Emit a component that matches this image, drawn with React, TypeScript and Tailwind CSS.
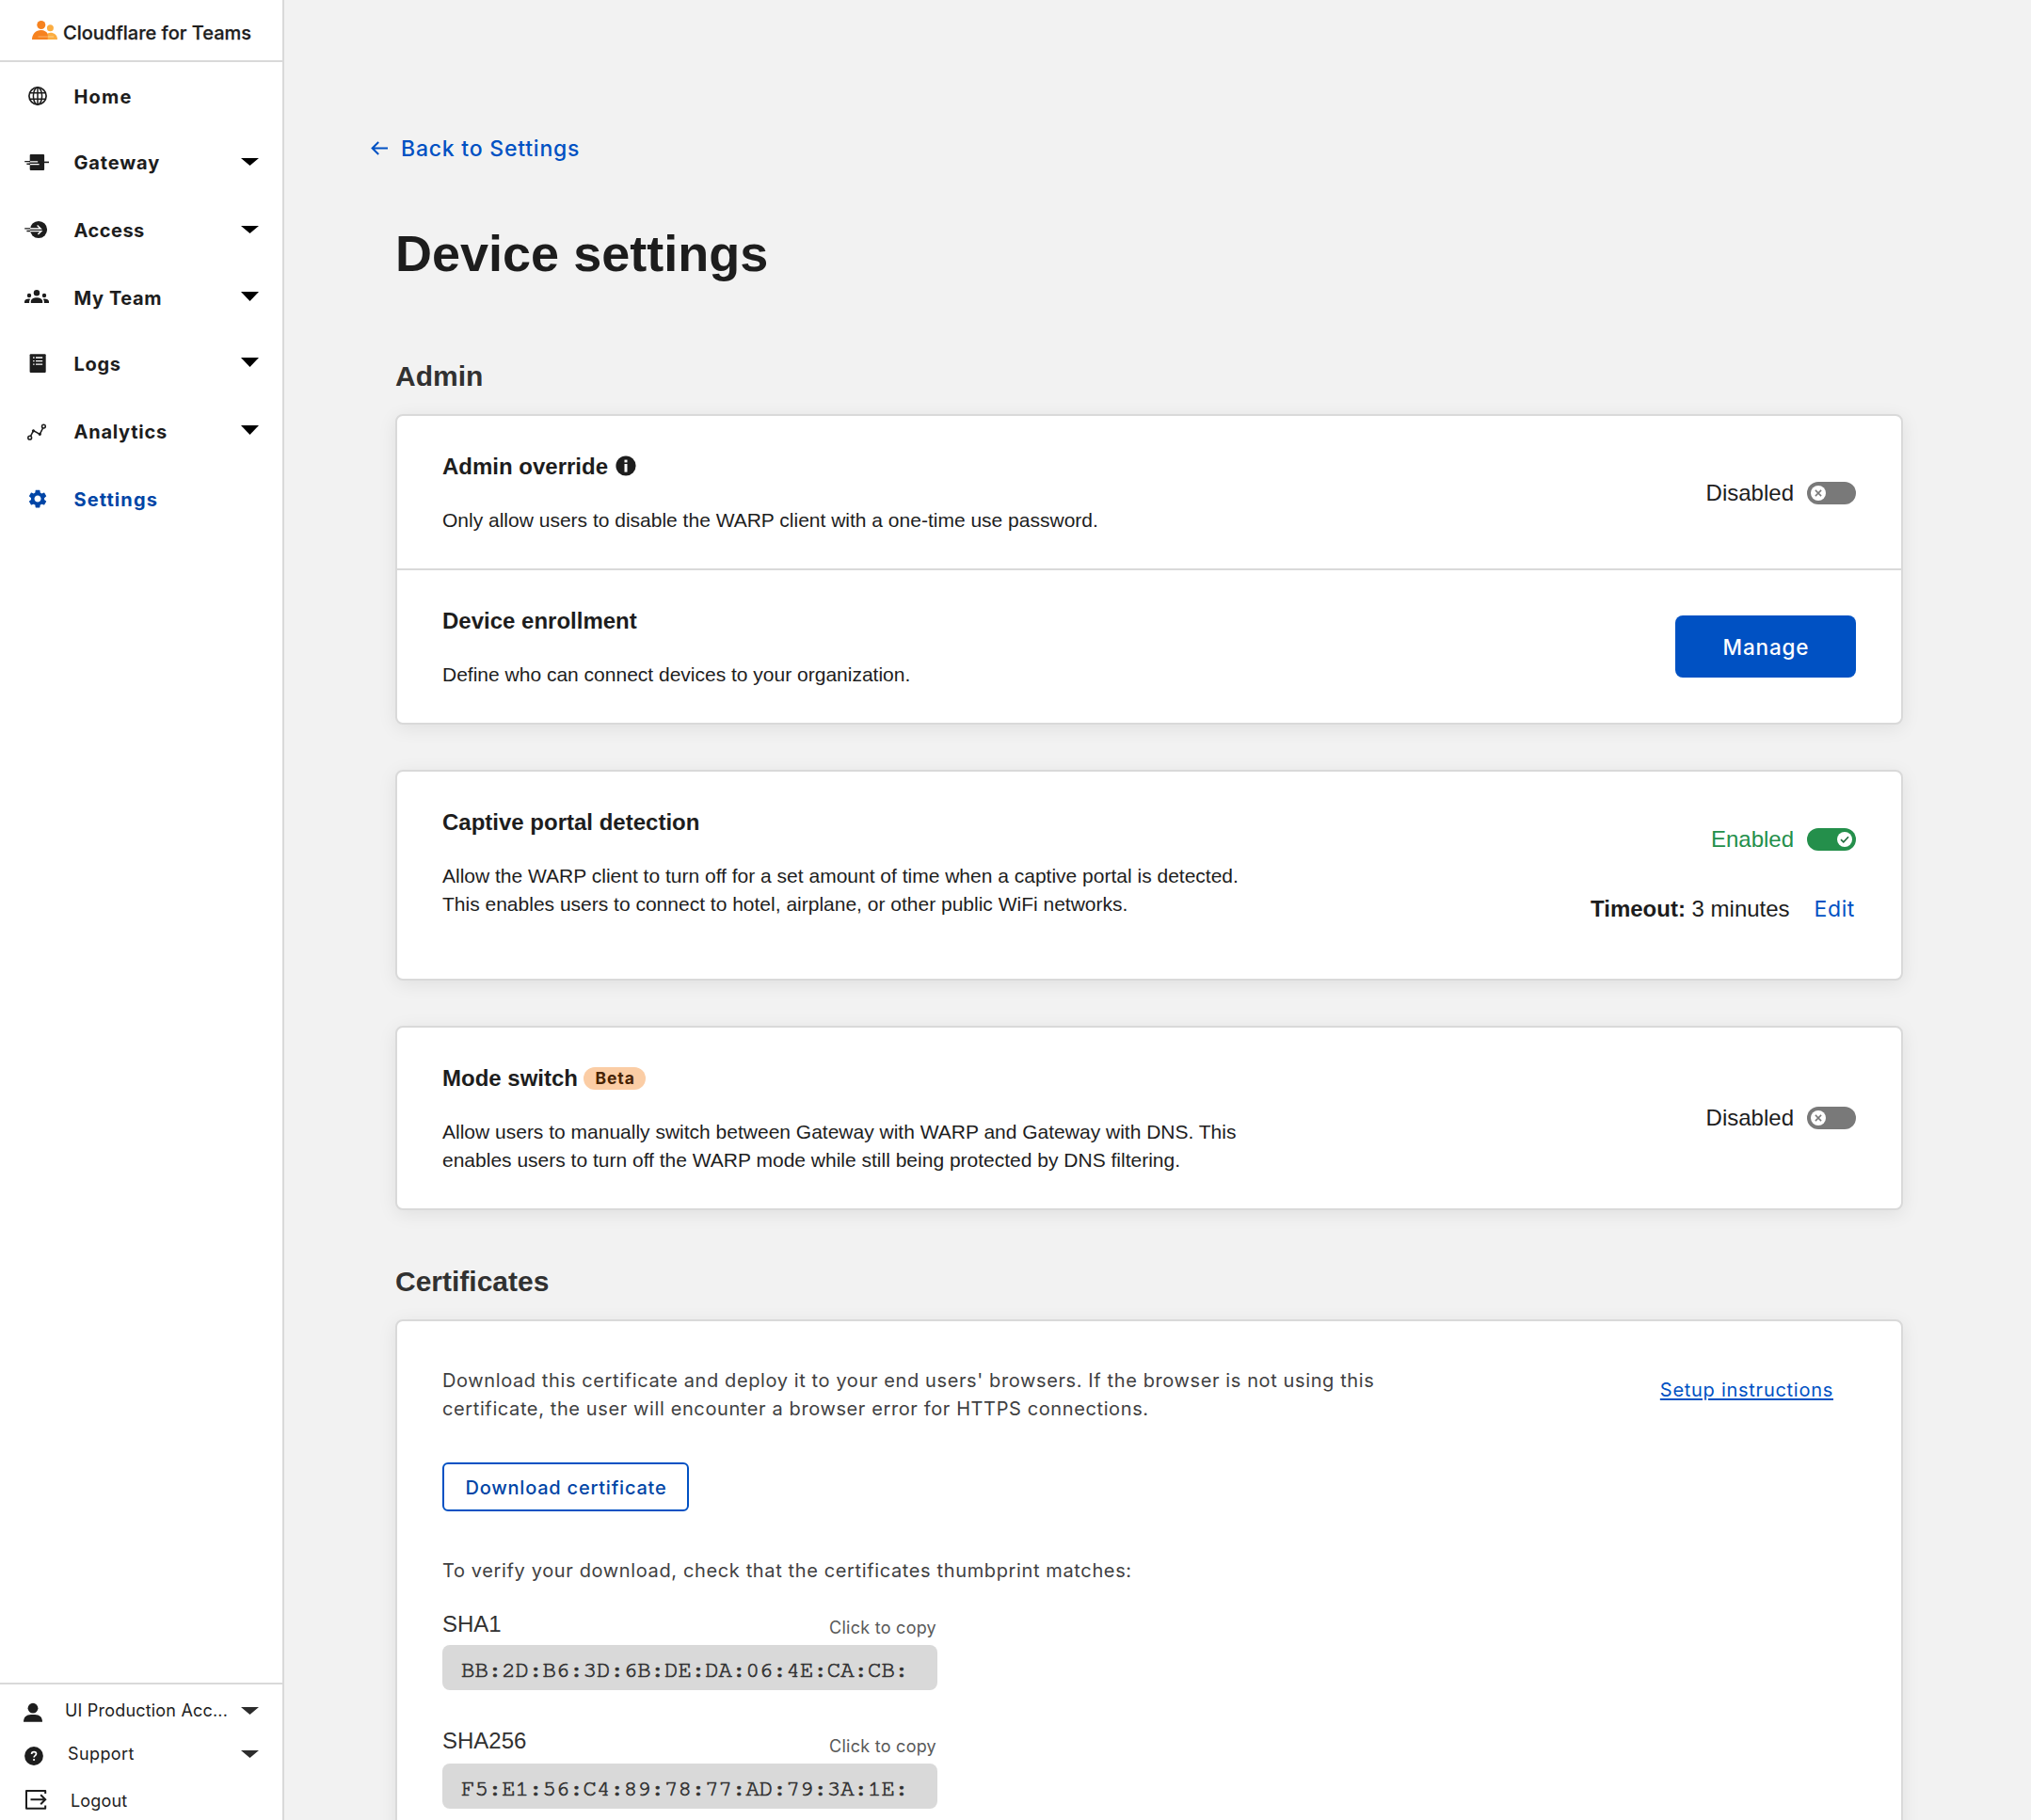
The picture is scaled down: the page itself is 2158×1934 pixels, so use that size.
import type { ReactNode } from "react";
import { MdSettings } from "react-icons/md";

const INTER = "font-['Inter',sans-serif]";
const HELV = "font-['Liberation_Sans',Arial,sans-serif]";

function Icon({ children }: { children: ReactNode }) {
  return (
    <svg className="ml-[25px] h-7 w-7 shrink-0 overflow-visible" viewBox="0 0 28 28" fill="none">
      {children}
    </svg>
  );
}

function Caret({ className }: { className: string }) {
  return (
    <svg className={className} viewBox="0 0 19 10" preserveAspectRatio="none">
      <path d="M0 0H19L9.5 10Z" fill="currentColor" />
    </svg>
  );
}

const SHORT_CARET = "mb-0.5 ml-auto h-2 w-[19px] text-black";
const TALL_CARET = "mb-1 ml-auto h-2.5 w-[19px] text-black";

const INK = "#1d1d1d";

const icons = {
  home: (
    <g stroke={INK} strokeWidth="1.5">
      <circle cx="15" cy="13" r="9.1" strokeWidth="1.7" />
      <ellipse cx="15" cy="13" rx="4.6" ry="9.1" />
      <path d="M15 4V22M6.6 9.8H23.4M6.6 16.2H23.4" />
    </g>
  ),
  gateway: (
    <g>
      <rect x="6.7" y="5" width="15.4" height="17" rx="1" fill={INK} />
      <path d="M22 13.4H27" stroke={INK} strokeWidth="1.6" />
      <path d="M1.2 12.6H7M3.4 15.3H7" stroke={INK} strokeWidth="1.4" />
      <path d="M7 12.8H15.2M7 15.6H16.6" stroke="#fff" strokeWidth="1.3" />
    </g>
  ),
  access: (
    <g>
      <circle cx="16" cy="13" r="9.1" fill={INK} />
      <path d="M1.2 11.8H8M3.4 14.5H8" stroke={INK} strokeWidth="1.3" />
      <path d="M7 12H18.2L14.6 8.6M7 14.6H18.8L15.4 18" stroke="#fff" strokeWidth="1.4" />
    </g>
  ),
  team: (
    <g fill={INK}>
      <circle cx="14" cy="8.2" r="3.2" />
      <circle cx="6" cy="11" r="2.2" />
      <circle cx="22" cy="11" r="2.2" />
      <path d="M7.8 19V17.4C7.8 14.6 11 13.2 14 13.2S20.2 14.6 20.2 17.4V19Z" />
      <path d="M1 19V17.6C1 15.6 3.2 14.5 5.6 14.5L7.3 14.8C6.5 15.6 6.1 16.5 6.1 17.6V19Z" />
      <path d="M27 19V17.6C27 15.6 24.8 14.5 22.4 14.5L20.7 14.8C21.5 15.6 21.9 16.5 21.9 17.6V19Z" />
    </g>
  ),
  logs: (
    <g>
      <rect x="6.6" y="3.2" width="17.1" height="19.8" rx="1" fill={INK} />
      <path d="M10.1 7H11.6M10.1 10.6H11.6M10.1 14.2H11.6M13 7H20.2M13 10.6H20.2M13 14.2H20.2" stroke="#fff" strokeWidth="1.3" />
    </g>
  ),
  analytics: (
    <g stroke={INK} strokeWidth="1.5">
      <circle cx="6.7" cy="20.2" r="1.9" />
      <circle cx="21.4" cy="8.1" r="1.9" />
      <path d="M7.6 18.4L10.5 12.6L17.3 16.4L20.6 9.9" />
      <circle cx="10.5" cy="12.8" r="0.9" fill={INK} />
      <circle cx="17.3" cy="16.3" r="0.9" fill={INK} />
    </g>
  ),
  settings: <MdSettings x="3.3" y="1.3" size={23.5} color="#0045a6" />,
};

const nav: { label: string; icon: keyof typeof icons; row: string; text: string; caret?: string }[] = [
  { label: "Home", icon: "home", row: "", text: "tracking-[1.15px]" },
  { label: "Gateway", icon: "gateway", row: "", text: "tracking-[0.85px]", caret: SHORT_CARET },
  { label: "Access", icon: "access", row: "mt-0.5", text: "tracking-[0.5px]", caret: SHORT_CARET },
  { label: "My Team", icon: "team", row: "mt-0.5", text: "tracking-[0.6px]", caret: TALL_CARET },
  { label: "Logs", icon: "logs", row: "", text: "tracking-[0.7px]", caret: TALL_CARET },
  { label: "Analytics", icon: "analytics", row: "mt-0.5", text: "tracking-[0.75px]", caret: TALL_CARET },
  { label: "Settings", icon: "settings", row: "mt-0.5", text: "tracking-[1.1px] text-[#0045a6]" },
];

function Sidebar() {
  return (
    <aside className={`flex w-[302px] shrink-0 flex-col border-r-2 border-[#d9d9d9] bg-white text-[#1d1d1d] ${INTER}`}>
      <div className="flex h-[66px] items-center border-b-2 border-[#d9d9d9] pt-1 pl-[34px]">
        <svg className="mb-1 h-5 w-[27px]" viewBox="0 0 27 20">
          <circle cx="9.8" cy="4.5" r="4.5" fill="#f6821f" />
          <path d="M0 20C0 14 4.2 10 9.6 10C13 10 15.6 11.6 17 14.4V20Z" fill="#f6821f" />
          <circle cx="19.4" cy="7.8" r="3.5" fill="#fbad41" />
          <path d="M16.7 20V13.4C20.6 11.6 27 13.4 27 20Z" fill="#fbad41" />
          <path d="M6.5 17H16.4" stroke="#fbb26a" strokeWidth="1" />
          <path d="M16.7 17H23" stroke="#fdd08d" strokeWidth="1" />
        </svg>
        <span className="mt-px ml-1.5 text-[20px] leading-7 font-medium [-webkit-text-stroke:0.25px_#1d1d1d]">Cloudflare for Teams</span>
      </div>
      <nav className="pt-0.5">
        {nav.map((n) => (
          <a key={n.label} className={`flex h-[70px] items-center pr-[25px] ${n.row}`}>
            <Icon>{icons[n.icon]}</Icon>
            <span className={`ml-[25.5px] text-[20px] leading-7 font-bold ${n.text}`}>{n.label}</span>
            {n.caret && <Caret className={n.caret} />}
          </a>
        ))}
      </nav>
      <div className="mt-auto h-[146px] border-t-2 border-[#d9d9d9] pt-1 text-[18px] leading-6">
        <div className="flex h-[46px] items-center pr-[25px]">
          <Icon>
            <circle cx="10" cy="12.2" r="5.4" fill={INK} />
            <path d="M0 26.7C0 21.8 3 19 8 19H12C17 19 20 21.8 20 26.7Z" fill={INK} />
          </Icon>
          <span className="mt-0.5 ml-4 tracking-[0.19px]">UI Production Acc...</span>
          <Caret className="mt-0.5 ml-auto h-2 w-[19px] text-[#2c2c2c]" />
        </div>
        <div className="flex h-[46px] items-center pr-[25px]">
          <Icon>
            <circle cx="11" cy="17" r="9.9" fill={INK} />
            <path d="M8.6 14.9C8.6 13.5 9.6 12.7 11.1 12.7S13.5 13.5 13.5 14.8C13.5 16.6 11.1 16.6 11.1 18.4" stroke="#fff" strokeWidth="1.7" />
            <circle cx="11.1" cy="21" r="1.1" fill="#fff" />
          </Icon>
          <span className="mt-0.5 ml-[19px] tracking-[0.4px]">Support</span>
          <Caret className="mt-0.5 ml-auto h-2 w-[19px] text-[#2c2c2c]" />
        </div>
        <div className="mt-1 flex h-[46px] items-center pr-[25px]">
          <Icon>
            <path d="M23.2 7V3.9H3V22.7H23.2V19.6" stroke={INK} strokeWidth="2" strokeLinejoin="round" />
            <path d="M7.5 13.2H23M18.2 8.2L23.2 13.2L18.2 18.2" stroke={INK} strokeWidth="2" />
          </Icon>
          <span className="mt-0.5 ml-[22px] tracking-[0.15px]">Logout</span>
        </div>
      </div>
    </aside>
  );
}

function Card({ className = "", children }: { className?: string; children: ReactNode }) {
  return (
    <section className={`rounded-lg border-2 border-[#d9d9d9] bg-white shadow-[0_4px_20px_rgba(0,0,0,0.08)] ${className}`}>
      {children}
    </section>
  );
}

function Setting({ title, badge, text, children }: { title: string; badge?: ReactNode; text: string; children: ReactNode }) {
  return (
    <div className="flex justify-between px-12 text-[#1d1d1d]">
      <div className="pt-[38px] pb-9">
        <h3 className="flex h-8 items-center text-[24px] leading-8 font-bold">
          {title}
          {badge}
        </h3>
        <p className="mt-[26px] max-w-[860px] text-[21px] leading-[30px]">{text}</p>
      </div>
      {children}
    </div>
  );
}

function Toggle({ on = false }: { on?: boolean }) {
  return (
    <div className={`flex items-center ${on ? "text-[#248f4b]" : ""}`}>
      <span className="text-[24px] leading-8">{on ? "Enabled" : "Disabled"}</span>
      <span className={`ml-3.5 flex h-6 w-[52px] rounded-full p-1 ${on ? "justify-end bg-[#248f4b]" : "bg-[#797979]"}`}>
        <svg className="h-4 w-4" viewBox="0 0 16 16" fill="none">
          <circle cx="8" cy="8" r="8" fill="#fff" />
          {on ? (
            <path d="M4 8.2L6.8 10.8L12 5.2" stroke="#1f6b3c" strokeWidth="1.6" />
          ) : (
            <path d="M4.9 4.9L11.1 11.1M11.1 4.9L4.9 11.1" stroke="#797979" strokeWidth="1.5" />
          )}
        </svg>
      </span>
    </div>
  );
}

function Thumbprint({ label, value, row }: { label: string; value: string; row: string }) {
  return (
    <div className="w-[526px]">
      <div className={`flex items-start justify-between ${row}`}>
        <span className={`text-[24px] leading-8 text-[#313131] ${HELV}`}>{label}</span>
        <span className="self-end pr-px text-[18px] leading-[37px] tracking-[0.26px] text-[#595959]">Click to copy</span>
      </div>
      <div className="flex h-12 items-center rounded-lg bg-[#d9d9d9] pt-1.5 pl-5 font-['FreeMono','Liberation_Mono',monospace] text-[24px] leading-6 text-[#313131] [-webkit-text-stroke:0.7px_#313131]">
        {value}
      </div>
    </div>
  );
}

export default function App() {
  return (
    <div className="flex h-[1934px] w-[2158px] overflow-hidden bg-[#f2f2f2]">
      <Sidebar />
      <main className={`flex-1 pt-[142px] pr-[136px] ${HELV}`}>
        <a className={`flex h-8 items-center pl-[92px] text-[23px] leading-8 font-medium tracking-[0.78px] text-[#0051c3] ${INTER}`}>
          <svg className="h-4 w-[18px]" viewBox="0 0 18 16" fill="none" stroke="#0051c3" strokeWidth="2">
            <path d="M18 7.5H2M8.2 1L1.6 7.5L8.2 14" />
          </svg>
          <span className="ml-3.5">Back to Settings</span>
        </a>
        <div className="pl-[118px]">
          <h1 className="mt-[63px] text-[54px] leading-[64px] font-bold text-[#1d1d1d]">Device settings</h1>

          <h2 className="mt-[81px] text-[30px] leading-9 font-bold text-[#313131]">Admin</h2>
          <Card className="mt-[22px]">
            <Setting
              title="Admin override"
              text="Only allow users to disable the WARP client with a one-time use password."
              badge={
                <svg className="mb-0.5 ml-[7.5px] h-[22px] w-[22px]" viewBox="0 0 22 22">
                  <circle cx="11" cy="11" r="10.6" fill={INK} />
                  <rect x="9.5" y="9" width="3" height="8.6" fill="#fff" />
                  <rect x="9.5" y="4.6" width="3" height="2.8" fill="#fff" />
                </svg>
              }
            >
              <div className="flex items-center pt-0.5">
                <Toggle />
              </div>
            </Setting>
            <div className="border-t-2 border-[#d9d9d9]">
              <Setting title="Device enrollment" text="Define who can connect devices to your organization.">
                <div className="flex items-center">
                  <button className={`h-[66px] w-48 rounded-lg bg-[#0051c3] pt-px pl-px text-[22.5px] font-medium tracking-[0.85px] text-white ${INTER}`}>
                    Manage
                  </button>
                </div>
              </Setting>
            </div>
          </Card>

          <Card className="mt-12 h-[224px]">
            <Setting
              title="Captive portal detection"
              text="Allow the WARP client to turn off for a set amount of time when a captive portal is detected. This enables users to connect to hotel, airplane, or other public WiFi networks."
            >
              <div className="flex flex-col items-end pt-14">
                <Toggle on />
                <div className="mt-[42px] flex text-[24px] leading-8">
                  <span>
                    <b>Timeout:</b> 3 minutes
                  </span>
                  <a className={`mr-px ml-[26px] text-[23px] tracking-[0.6px] text-[#0051c3] ${INTER}`}>Edit</a>
                </div>
              </div>
            </Setting>
          </Card>

          <Card className="mt-12">
            <Setting
              title="Mode switch"
              text="Allow users to manually switch between Gateway with WARP and Gateway with DNS. This enables users to turn off the WARP mode while still being protected by DNS filtering."
              badge={
                <span className={`ml-1.5 h-6 w-[66px] rounded-full bg-[#fbcda5] pl-[12.5px] text-[17.5px] leading-6 font-bold tracking-[0.9px] text-[#482303] ${INTER}`}>
                  Beta
                </span>
              }
            >
              <div className="flex items-center">
                <Toggle />
              </div>
            </Setting>
          </Card>

          <h2 className="mt-[58px] text-[30px] leading-9 font-bold text-[#313131]">Certificates</h2>
          <Card className={`mt-[22px] h-[600px] px-12 text-[20px] leading-[30px] text-[#404041] ${INTER}`}>
            <div className="flex justify-between pt-12">
              <p className="w-[1000px] tracking-[0.61px]">
                Download this certificate and deploy it to your end users' browsers. If the browser is not using this
                certificate, the user will encounter a browser error for HTTPS connections.
              </p>
              <a className="mt-2.5 mr-6 self-start tracking-[0.73px] text-[#0051c3] underline decoration-2 underline-offset-2">
                Setup instructions
              </a>
            </div>
            <button className="mt-[42px] flex h-[52px] w-[262px] items-center rounded-md border-2 border-[#0051c3] pt-px pl-[22.5px] font-medium tracking-[0.77px] text-[#0045a6]">
              Download certificate
            </button>
            <p className="mt-12 mb-[26px] tracking-[0.63px]">
              To verify your download, check that the certificates thumbprint matches:
            </p>
            <Thumbprint label="SHA1" value="BB:2D:B6:3D:6B:DE:DA:06:4E:CA:CB:" row="h-[38px]" />
            <div className="mt-[38px]">
              <Thumbprint label="SHA256" value="F5:E1:56:C4:89:78:77:AD:79:3A:1E:" row="h-10" />
            </div>
          </Card>
        </div>
      </main>
    </div>
  );
}
